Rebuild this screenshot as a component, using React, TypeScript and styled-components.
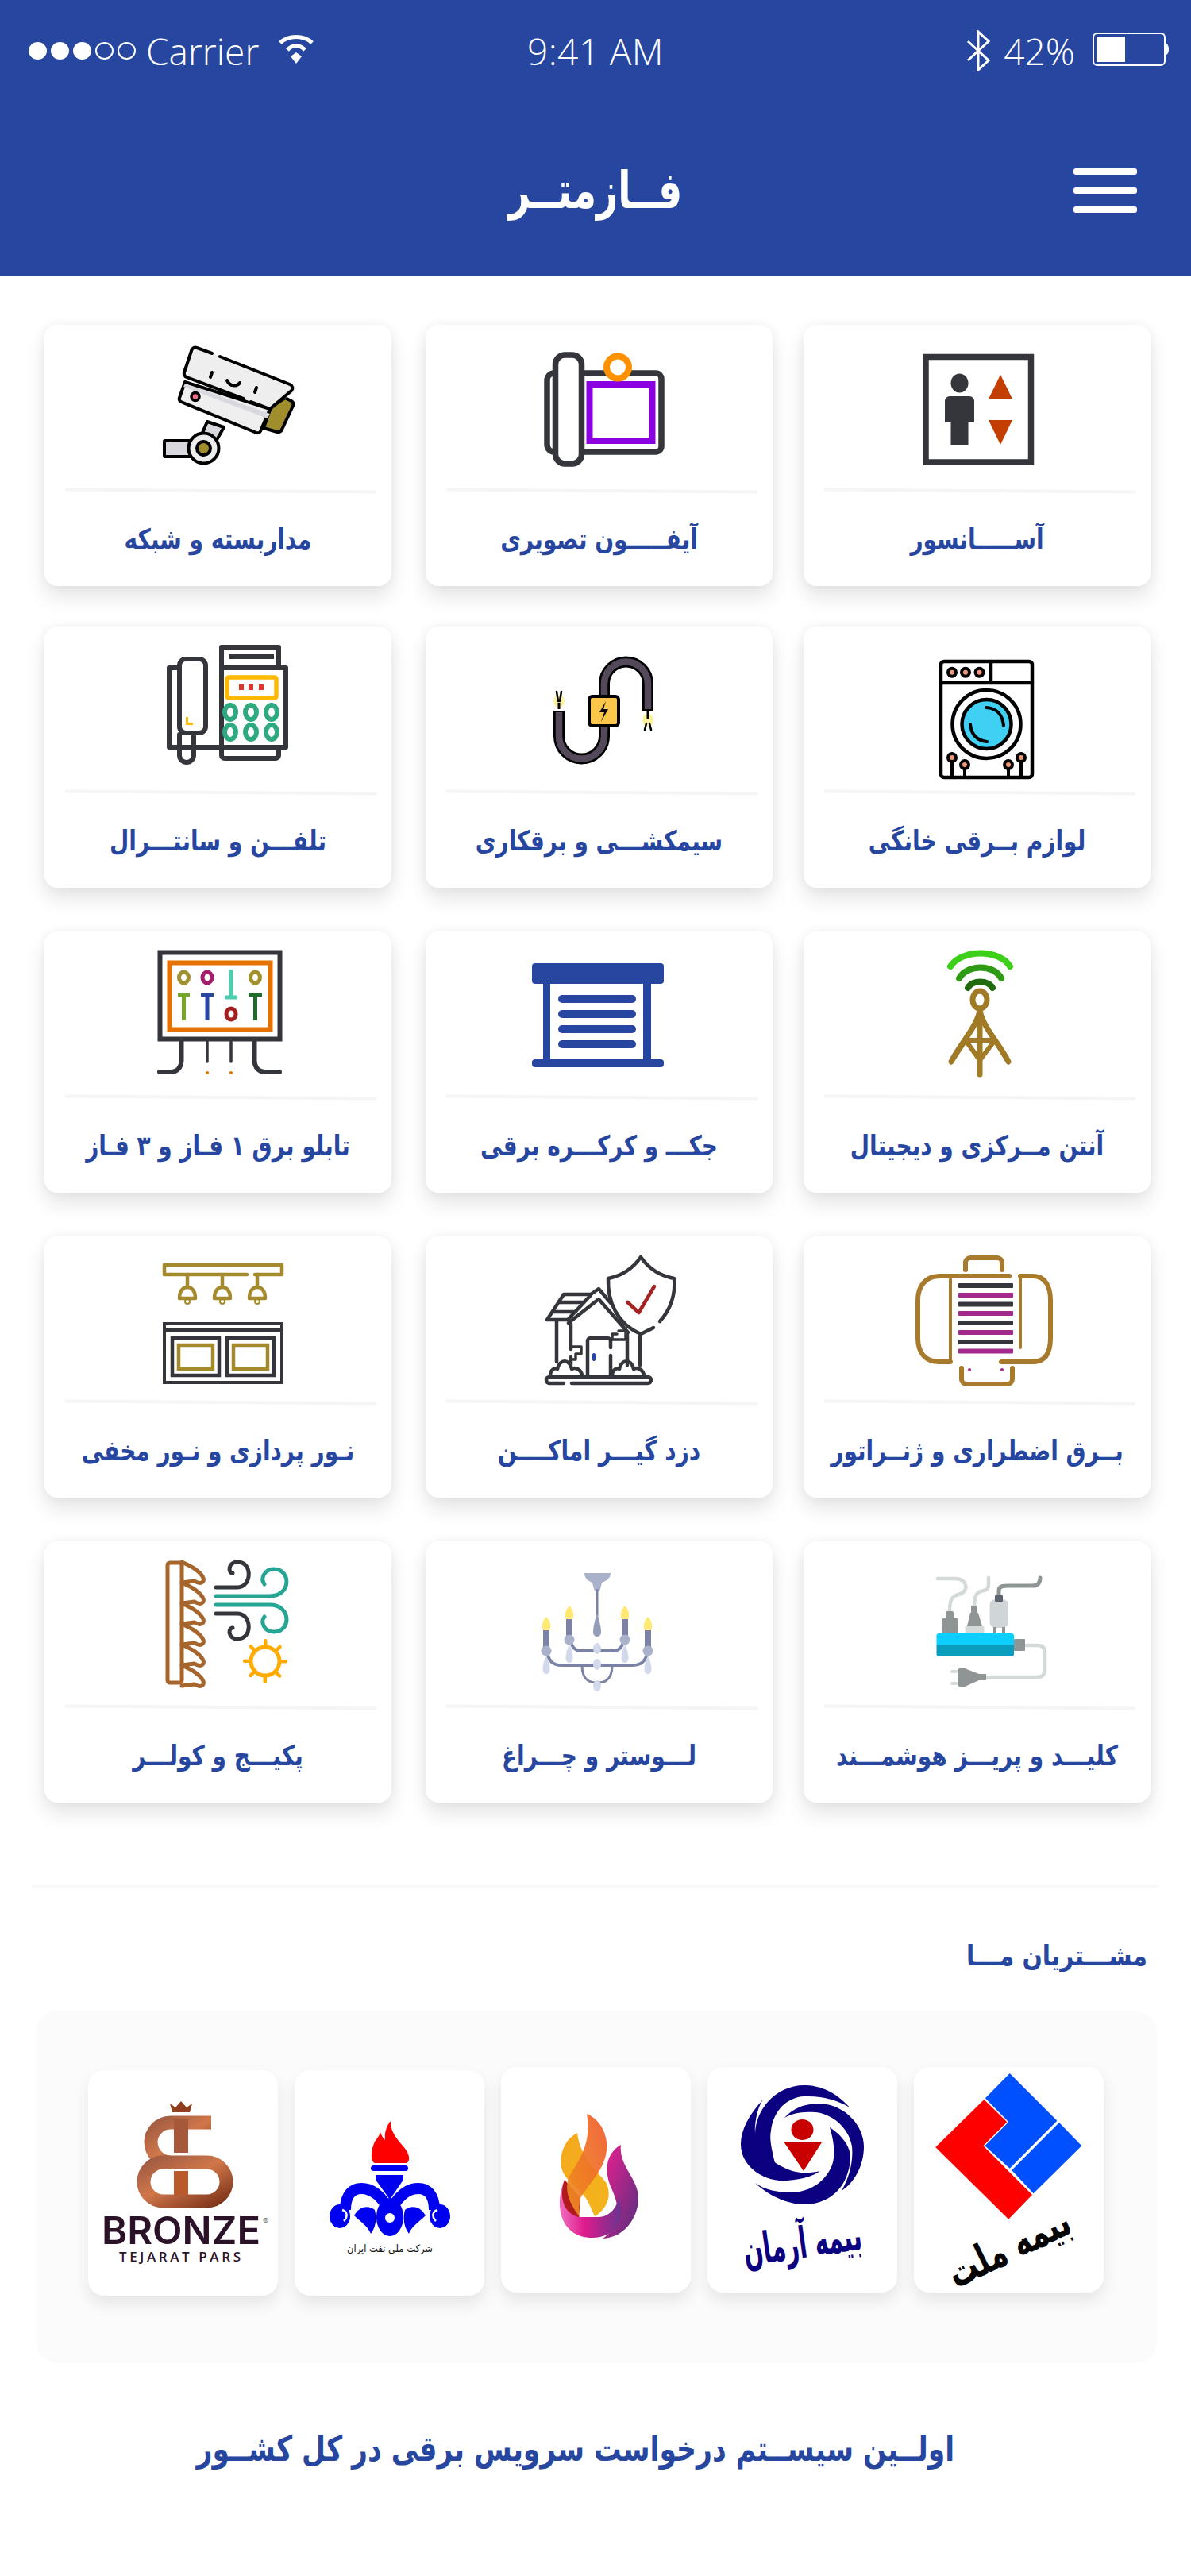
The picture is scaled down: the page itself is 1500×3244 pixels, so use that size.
import styled, { createGlobalStyle } from "styled-components";

const BLUE = "#2746a0";
const DARK = "#34363c";

const GlobalStyle = createGlobalStyle`
  html, body {
    margin: 0;
    padding: 0;
    background: #fff;
  }
  body {
    font-family: "DejaVu Sans", "Noto Sans", sans-serif;
  }
`;

const Page = styled.div`
  width: 1500px;
  height: 3244px;
  overflow: hidden;
  background: #fff;
`;

const Header = styled.header`
  height: 348px;
  box-sizing: border-box;
  padding-top: 38px;
  background: ${BLUE};
  color: #fff;
`;

const StatusBar = styled.div`
  display: grid;
  grid-template-columns: 1fr auto 1fr;
  align-items: center;
  height: 52px;
  padding: 0 26px 0 36px;
  font-family: "Open Sans", "Liberation Sans", sans-serif;
  font-weight: 300;
  font-size: 46px;
  line-height: 52px;
`;

const StatusLeft = styled.div`
  display: flex;
  align-items: center;
`;

const StatusRight = styled.div`
  display: flex;
  align-items: center;
  justify-content: flex-end;
`;

const Dots = styled.div`
  display: flex;
  gap: 5px;
  margin-right: 13px;
`;

const Dot = styled.span<{ $on: boolean }>`
  display: block;
  box-sizing: border-box;
  width: 23px;
  height: 22px;
  border-radius: 50%;
  border: 2px solid #fff;
  background: ${(p) => (p.$on ? "#fff" : "transparent")};
`;

const Clock = styled.div`
  margin: 0 10px 0 0;
  letter-spacing: 0.4px;
`;

const WifiIcon = styled.svg`
  width: 52px;
  height: 36px;
  margin-left: 21px;
  margin-top: -4px;
`;

const BluetoothIcon = styled.svg`
  width: 30px;
  height: 52px;
  margin-right: 17px;
`;

const BatteryIcon = styled.svg`
  width: 98px;
  height: 42px;
  margin-left: 22px;
  margin-top: -4px;
`;

const NavRow = styled.div`
  display: grid;
  grid-template-columns: 1fr auto 1fr;
  align-items: center;
  height: 100px;
  margin-top: 100px;
  padding: 0 68px;
`;

const Title = styled.h1`
  grid-column: 2;
  margin: 0;
  font-size: 64px;
  font-weight: 700;
  line-height: 100px;
  direction: rtl;
  transform: scaleX(0.74);
`;

const Burger = styled.div`
  justify-self: end;
  display: flex;
  flex-direction: column;
  gap: 16px;
`;

const BurgerBar = styled.span`
  display: block;
  width: 80px;
  height: 8px;
  border-radius: 3px;
  background: #fff;
`;

const CategoryGrid = styled.section`
  direction: rtl;
  display: grid;
  grid-template-columns: 437px 437px 441px;
  column-gap: 39px;
  row-gap: 55px;
  padding: 61px 51px 0 56px;
`;

const Card = styled.article`
  direction: ltr;
  display: flex;
  flex-direction: column;
  width: 437px;
  height: 329px;
  background: #fff;
  border-radius: 16px;
  box-shadow: 0 14px 26px rgba(0, 0, 0, 0.1), 0 0 14px rgba(0, 0, 0, 0.05);

  &:nth-child(3n) {
    justify-self: end;
  }
  &:nth-child(-n + 3) {
    margin-bottom: -4px;
  }
`;

const IconArea = styled.div`
  display: flex;
  justify-content: center;
  height: 207px;
  box-sizing: border-box;
  padding-top: 12px;
`;

const IconSvg = styled.svg`
  display: block;
  width: 200px;
  height: 190px;
`;

const Divider = styled.div`
  width: 392px;
  height: 4px;
  margin-left: 26px;
  background: #f5f5f5;
  transform: rotate(0.45deg);
`;

const Label = styled.h3`
  flex: 1;
  display: flex;
  align-items: center;
  justify-content: center;
  margin: 0;
  direction: rtl;
  color: ${BLUE};
  font-size: 35px;
  font-weight: 700;
  white-space: nowrap;
  transform: scaleX(0.8);
`;

const Separator = styled.div`
  height: 3px;
  margin: 104px 41px 0 40px;
  background: #f8f8f8;
`;

const SectionTitle = styled.h2`
  margin: 0 55px 0 0;
  height: 155px;
  box-sizing: border-box;
  padding-top: 66px;
  direction: rtl;
  color: ${BLUE};
  font-size: 35px;
  font-weight: 700;
  line-height: 40px;
  transform: scaleX(0.85);
  transform-origin: right center;
`;

const ClientsPanel = styled.section`
  direction: rtl;
  display: flex;
  gap: 21px;
  align-items: flex-start;
  height: 444px;
  box-sizing: border-box;
  margin: 0 43px 0 45px;
  padding: 71px 67px 0 0;
  border-radius: 28px;
  background: #fbfbfb;
`;

const LogoCard = styled.div<{ $drop?: boolean }>`
  direction: ltr;
  width: 239px;
  height: 284px;
  margin-top: ${(p) => (p.$drop ? "4px" : "0")};
  background: #fff;
  border-radius: 20px;
  overflow: hidden;
  box-shadow: 0 10px 20px rgba(0, 0, 0, 0.09);
`;

const LogoSvg = styled.svg`
  display: block;
  width: 239px;
  height: 284px;
`;

const Slogan = styled.p`
  margin: 78px 0 0;
  padding-right: 64px;
  direction: rtl;
  text-align: center;
  color: ${BLUE};
  font-size: 44px;
  font-weight: 700;
  line-height: 60px;
  white-space: nowrap;
  transform: scaleX(0.786);
`;

const Line = styled.g`
  fill: none;
  stroke-linecap: round;
  stroke-linejoin: round;
`;

function Elevator() {
  return (
    <IconSvg viewBox="0 0 200 190">
      <rect x="35" y="28.500" width="132.500" height="132.500" fill="none" stroke={DARK} strokeWidth="7.500" />
      <ellipse cx="77.500" cy="61.500" rx="11" ry="12" fill={DARK} />
      <path d="M65 78h25a6 6 0 0 1 6 6v27h-7.500v28h-22v-28h-7.500v-27a6 6 0 0 1 6-6z" fill={DARK} />
      <path d="M129 50.700 144 81.400H114Z M114 108H144L129 139Z" fill="#c43e00" />
    </IconSvg>
  );
}

function VideoPhone() {
  return (
    <IconSvg viewBox="0 0 200 190">
      <Line stroke={DARK} strokeWidth="7.500">
        <path d="M80 49H171a7 7 0 0 1 7 7V141a7 7 0 0 1-7 7H80" />
        <path d="M42 49a9 9 0 0 0-8 9v82a9 9 0 0 0 8 8" />
        <rect x="44.500" y="26" width="33" height="137" rx="12" />
      </Line>
      <rect x="87.500" y="63" width="79" height="71" fill="#fff" stroke="#8b00e0" strokeWidth="8" />
      <circle cx="123" cy="41.500" r="14" fill="#fff" stroke="#ff9100" strokeWidth="8" />
    </IconSvg>
  );
}

function Camera() {
  return (
    <IconSvg viewBox="0 0 200 190">
      <path d="M86 110 107 117 94 140 76 133Z" fill="#d8d8de" stroke="#000" strokeWidth="4" strokeLinejoin="round" />
      <rect x="32" y="134" width="36" height="20" rx="1" fill="#d8d8de" stroke="#000" strokeWidth="4" />
      <circle cx="81.500" cy="143.500" r="19" fill="#ededee" stroke="#000" strokeWidth="4" />
      <circle cx="81.500" cy="143.500" r="8.500" fill="#a08d2c" stroke="#000" strokeWidth="4" />
      <path d="M166 92 184 80 192 84a5 5 0 0 1 2 6L180 120a5 5 0 0 1-6 3L157 118Z" fill="#a08d2c" stroke="#000" strokeWidth="4" strokeLinejoin="round" />
      <path d="M58 60 51 80a4 4 0 0 0 2 5L148 124a4 4 0 0 0 5-2L165 94Z" fill="#efeff0" stroke="#000" strokeWidth="4" strokeLinejoin="round" />
      <path d="M58 62 165 100 162 106 56 66Z" fill="#d8d8de" />
      <circle cx="71" cy="78.500" r="5" fill="#f0708c" stroke="#000" strokeWidth="3.500" />
      <path d="M73 17 194 64a5 5 0 0 1 2 8L165 94 60 54a5 5 0 0 1-3-6L66 21a5 5 0 0 1 7-4Z" fill="#eeeeef" />
      <Line stroke="#000" strokeWidth="4">
        <path d="M92 24 73 17a5 5 0 0 0-7 4L57 48a5 5 0 0 0 3 6L132 81" />
        <path d="M102 28 190 63a5 5 0 0 1 2 8L165 94 141 85" />
        <path d="M92 48 90 54M148 67 146 73" />
        <path d="M111 58C114 66 124 66 127 61" />
      </Line>
    </IconSvg>
  );
}

function Washer() {
  return (
    <IconSvg viewBox="0 0 200 190">
      <Line stroke="#000" strokeWidth="4.500">
        <rect x="54" y="32" width="115" height="146" rx="4" />
        <path d="M54 59H169M117 32V59" />
        <circle cx="111.500" cy="111" r="43" />
      </Line>
      <circle cx="111.500" cy="111" r="31" fill="#3fd0f3" stroke="#000" strokeWidth="4.500" />
      <Line stroke="#000" strokeWidth="4">
        <path d="M111 90C125 91 132 100 133 113" />
        <path d="M91 111C92 124 100 132 112 133" />
        <path d="M68 153V178M84 162V178M139 162V178M155 153V178" />
      </Line>
      {[
        [68, 45.700],
        [85, 45.700],
        [102.500, 45.700],
        [68, 153],
        [84, 162],
        [139, 162],
        [155, 153],
      ].map(([x, y]) => (
        <circle key={`${x}-${y}`} cx={x} cy={y} r="5" fill="#f2997a" stroke="#000" strokeWidth="4" />
      ))}
    </IconSvg>
  );
}

function Cable() {
  return (
    <IconSvg viewBox="0 0 200 190">
      <ellipse cx="49" cy="82" rx="7" ry="8" fill="#fdf3a0" />
      <ellipse cx="161" cy="106" rx="7" ry="8" fill="#fdf3a0" />
      <Line stroke="#000" strokeWidth="2.500">
        <path d="M46 70 48 82M52 70 50 82M159 110 157 118M163 110 165 118" />
      </Line>
      <Line stroke="#000" strokeWidth="14">
        <path d="M106 75V60A27 27 0 0 1 161 60V94" strokeLinecap="butt" />
        <path d="M106 113V126A28 28 0 0 1 49 126V94" strokeLinecap="butt" />
      </Line>
      <Line stroke="#53495a" strokeWidth="8.500">
        <path d="M106 75V60A27 27 0 0 1 161 60V92" strokeLinecap="butt" />
        <path d="M106 113V126A28 28 0 0 1 49 126V96" strokeLinecap="butt" />
      </Line>
      <path d="M49 84V92M161 94V104" stroke="#000" strokeWidth="3" />
      <rect x="87" y="76" width="37" height="37" rx="4" fill="#fbc64a" stroke="#000" strokeWidth="4" />
      <path d="M108 82 100 96H106L102 108 111 92H105Z" fill="#000" />
    </IconSvg>
  );
}

function FaxPhone() {
  return (
    <IconSvg viewBox="0 0 200 190">
      <Line stroke={DARK} strokeWidth="6">
        <path d="M50 40H38V140H185V40H105" />
        <path d="M104 38V14H176V38" />
        <path d="M104 142V150a4 4 0 0 0 4 4H172a4 4 0 0 0 4-4V142" />
        <rect x="51" y="29" width="33" height="93" rx="8" />
        <path d="M104 40V140" />
        <path d="M51 124V150a9 9 0 0 0 18 0V124" />
      </Line>
      <path d="M114 26H170" stroke={DARK} strokeWidth="6" />
      <rect x="111" y="52" width="62" height="26" rx="2" fill="none" stroke="#ffb900" strokeWidth="5.500" />
      <path d="M126 61h6v7h-6zM138 61h6v7h-6zM151 61h6v7h-6z" fill="#e0352b" />
      <path d="M59 102h3v7h6v3h-9z" fill="#ffb900" />
      {[115, 141, 167].map((x) =>
        [96, 121].map((y) => (
          <ellipse key={`${x}-${y}`} cx={x} cy={y} rx="7" ry="9" fill="none" stroke="#2faa80" strokeWidth="6" />
        )),
      )}
    </IconSvg>
  );
}

function Antenna() {
  const brown = "#a07a25";
  return (
    <IconSvg viewBox="0 0 200 190">
      <Line strokeWidth="8">
        <path d="M66 32C80 10 128 10 141 32" stroke="#3ecf1a" />
        <path d="M77 47C87 29 121 29 130 47" stroke="#2f9b14" />
        <path d="M88 59C93 49 114 49 119 59" stroke="#1f6b0e" />
      </Line>
      <Line stroke={brown} strokeWidth="7">
        <ellipse cx="103" cy="74" rx="9" ry="11" />
        <path d="M103 88C98 110 78 130 67 152M103 88C108 110 128 130 139 152" />
        <path d="M103 88V168" />
        <path d="M67 152 85 125 103 150 122 125 139 152M85 125H122" strokeWidth="6" />
      </Line>
    </IconSvg>
  );
}

function Shutter() {
  return (
    <IconSvg viewBox="0 0 200 190">
      <rect x="15" y="28" width="166" height="26" rx="4" fill={BLUE} />
      <rect x="29" y="54" width="9" height="96" fill={BLUE} />
      <rect x="155" y="54" width="10" height="96" fill={BLUE} />
      {[68, 87, 106, 125].map((y) => (
        <rect key={y} x="48" y={y} width="98" height="10" rx="5" fill={BLUE} />
      ))}
      <rect x="15" y="149" width="166" height="10" rx="4" fill={BLUE} />
    </IconSvg>
  );
}

function Panel() {
  return (
    <IconSvg viewBox="0 0 200 190">
      <rect x="26.500" y="14.500" width="151" height="109" fill="none" stroke={DARK} strokeWidth="6" />
      <rect x="38.500" y="27.500" width="127" height="84" fill="none" stroke="#e57200" strokeWidth="6" />
      <ellipse cx="56.500" cy="46" rx="6" ry="7" fill="none" stroke="#a0912d" strokeWidth="5" />
      <ellipse cx="86" cy="46" rx="6" ry="7" fill="none" stroke="#a31f6c" strokeWidth="5" />
      <ellipse cx="146.500" cy="46" rx="6" ry="7" fill="none" stroke="#a0912d" strokeWidth="5" />
      <ellipse cx="116" cy="92" rx="6" ry="7" fill="none" stroke="#a31f1f" strokeWidth="5" />
      <path d="M49 68H64M56.500 68V100" stroke="#76a52b" strokeWidth="5" fill="none" />
      <path d="M78 68H94M86 68V100" stroke={BLUE} strokeWidth="5" fill="none" />
      <path d="M108 71H124M116 36V71" stroke="#4ccfae" strokeWidth="5" fill="none" />
      <path d="M138 68H155M146.500 68V100" stroke="#1f6b2c" strokeWidth="5" fill="none" />
      <Line stroke={DARK} strokeWidth="6">
        <path d="M53.500 127V150C53.500 160 47 165 41 165H26" />
        <path d="M145.500 127V150C145.500 160 152 165 158 165H177" />
        <path d="M86 127V152M116 127V152" strokeWidth="3.500" />
      </Line>
      <circle cx="86" cy="166" r="2" fill="#e57200" />
      <circle cx="116" cy="166" r="2" fill="#e57200" />
    </IconSvg>
  );
}

function Generator() {
  const brown = "#a87a2c";
  return (
    <IconSvg viewBox="0 0 200 190">
      <Line stroke={brown} strokeWidth="6">
        <path d="M140 38H52C34 38 25 52 25 68V116C25 134 34 146 52 146H66" />
        <path d="M154 38H170C186 38 192 52 192 68V116C192 134 186 146 170 146H130" />
        <path d="M66 42V144M154 38V128" strokeWidth="4" />
        <path d="M85 30V21a6 6 0 0 1 6-6H125a6 6 0 0 1 6 6V30" />
        <path d="M80 154V168a6 6 0 0 0 6 6H138a6 6 0 0 0 6-6V154" />
      </Line>
      {[50, 62, 73.500, 85, 97, 109, 121, 132.500].map((y, i) => (
        <rect key={y} x="76" y={y - 3} width="69" height="6" rx="1" fill={i % 2 ? "#a32a8c" : DARK} />
      ))}
      <circle cx="90" cy="156" r="2" fill="#a32a8c" />
      <circle cx="131" cy="156" r="2" fill="#a32a8c" />
    </IconSvg>
  );
}

function AlarmHouse() {
  return (
    <IconSvg viewBox="0 0 200 190">
      <Line stroke={DARK} strokeWidth="4.500">
        <path d="M176 95C190 80 196 60 194 41 178 38 163 30 152 14 141 30 126 38 111 41 110 70 122 98 152 111L168 103" />
        <path d="M61 97 99 67 136 109" />
        <path d="M89 61 99 54 116 74" />
        <path d="M89 61H55L34 93H60L89 62" />
        <path d="M50 71H80M43 83H70" />
        <path d="M46 94V146M64 98V130M64 140V150M135 112V150M151 112V150" />
        <path d="M85 163V120a4 4 0 0 1 4-4H110a4 4 0 0 1 4 4V128M114 138V163" />
        <path d="M64 127H77V136H70V143H64M122 111H116V118H133V107H124" strokeWidth="3.500" />
        <path d="M38 163C38 156 44 153 47 155 50 142 62 142 65 155 70 152 77 156 78 163" />
        <path d="M116 163C116 156 122 153 125 155 128 142 140 142 143 155 148 152 155 156 156 163" />
        <path d="M113 165H161a4 4 0 0 1 4 4V169a4 4 0 0 1-4 4H65M55 173H37a4 4 0 0 1-4-4 4 4 0 0 1 4-4H113" />
      </Line>
      <ellipse cx="93" cy="140" rx="2.500" ry="5" fill={BLUE} />
      <path d="M135.500 71 149.500 84 169 51" fill="none" stroke="#a52222" strokeWidth="4.500" strokeLinecap="round" strokeLinejoin="round" />
    </IconSvg>
  );
}

function LightPanel() {
  const gold = "#a58a2d";
  return (
    <IconSvg viewBox="0 0 200 190">
      <Line stroke={gold} strokeWidth="4.500">
        <path d="M136 36H32V24H180V36H146" />
        <path d="M61 36V51M105 36V51M149 36V51" />
        <path d="M51 66C51 56 56 52 61 52 66 52 71 56 71 66Z" />
        <path d="M95 66C95 56 100 52 105 52 110 52 115 56 115 66Z" />
        <path d="M139 66C139 56 144 52 149 52 154 52 159 56 159 66Z" />
      </Line>
      <circle cx="61" cy="70" r="3" fill="none" stroke={gold} strokeWidth="2" />
      <circle cx="105" cy="70" r="3" fill="none" stroke={gold} strokeWidth="2" />
      <circle cx="149" cy="70" r="3" fill="none" stroke={gold} strokeWidth="2" />
      <rect x="32" y="98" width="148" height="74" fill="none" stroke={DARK} strokeWidth="4" />
      <path d="M32 106H180" stroke={DARK} strokeWidth="4" />
      <rect x="42" y="116" width="59" height="47" fill="none" stroke={DARK} strokeWidth="4.500" />
      <rect x="111" y="116" width="59" height="47" fill="none" stroke={DARK} strokeWidth="4.500" />
      <rect x="50" y="125" width="43" height="30" fill="none" stroke={gold} strokeWidth="4.500" />
      <rect x="119" y="125" width="43" height="30" fill="none" stroke={gold} strokeWidth="4.500" />
    </IconSvg>
  );
}

function SmartPlug() {
  return (
    <IconSvg viewBox="0 0 200 190">
      <Line stroke="#d4d9da" strokeWidth="4.500">
        <path d="M50 35H72C88 35 90 52 76 55 68 57 65 62 65 76" />
        <path d="M114 34V42C114 50 108 50 104 51 98 53 96 60 96 69" />
        <path d="M161 119H176C182 119 185 122 185 128V149C185 155 182 159 176 159H111" />
      </Line>
      <path d="M127 56V50C127 44 133 44 140 44H170C176 44 179 40 179 34" fill="none" stroke="#8f9494" strokeWidth="5" strokeLinecap="round" />
      <rect x="55.500" y="85" width="20" height="19" rx="2" fill="#8f9494" />
      <rect x="60" y="76" width="10" height="10" rx="2" fill="#8f9494" />
      <path d="M91 78H101L106 95H87Z" fill="#8f9494" />
      <rect x="92" y="69" width="8" height="9" fill="#8f9494" />
      <rect x="84.500" y="95" width="24" height="9" rx="1" fill="#d4d9da" />
      <rect x="115.500" y="61" width="23.500" height="36" rx="7" fill="#d0d6d8" />
      <rect x="120" y="96" width="4" height="8" fill="#8f9494" />
      <rect x="131" y="96" width="4" height="8" fill="#8f9494" />
      <rect x="122" y="55" width="10" height="10" rx="2" fill="#5f6470" />
      <path d="M48.500 107a3 3 0 0 1 3-3H143a3 3 0 0 1 3 3V119H48.500Z" fill="#0dcfff" />
      <path d="M48.500 118.500H146V130a3 3 0 0 1-3 3H51.500a3 3 0 0 1-3-3Z" fill="#0a9dbd" />
      <rect x="146" y="111" width="14" height="15" rx="1" fill="#8f9494" />
      <rect x="66" y="150" width="9" height="4" rx="2" fill="#d4d9da" />
      <rect x="66" y="165" width="9" height="4" rx="2" fill="#d4d9da" />
      <path d="M78 148H84L102 155H111V163H102L84 171H78a3 3 0 0 1-3-3V151a3 3 0 0 1 3-3Z" fill="#8f9494" />
    </IconSvg>
  );
}

function Chandelier() {
  const arm = "#7c82a5";
  const ball = "#aab1cb";
  const drop = "#d3d9ec";
  const bulbs: [number, number][] = [
    [33, 83],
    [62, 69],
    [132, 69],
    [161, 83],
  ];
  return (
    <IconSvg viewBox="0 0 200 190">
      <path d="M81 28H114C114 36 106 39 103 40L101 48C99 53 95 53 93 48L91 40C88 39 81 36 81 28Z" fill={ball} />
      <rect x="96" y="48" width="2.500" height="34" fill={arm} />
      <path d="M97 78C100 88 102 96 102 102 102 110 92 110 92 102 92 96 94 88 97 78Z" fill="#959cbb" />
      <path d="M33 125C36 140 42 144 52 144H142C152 144 158 140 162 125" fill="none" stroke={arm} strokeWidth="4" />
      <path d="M62 105C63 118 68 126 76 126H118C126 126 131 118 132 105" fill="none" stroke={arm} strokeWidth="4" />
      <path d="M78 144C78 165 90 166 97 166 104 166 116 165 116 144" fill="none" stroke={arm} strokeWidth="3" />
      {bulbs.map(([x, y]) => (
        <g key={x}>
          <path d={`M${x} ${y}C${x + 6} ${y + 6} ${x + 6} ${y + 13} ${x + 4} ${y + 17}H${x - 4}C${x - 6} ${y + 13} ${x - 6} ${y + 6} ${x} ${y}Z`} fill="#ffe873" />
          <rect x={x - 4} y={y + 17} width="8" height="23" fill={arm} />
          <ellipse cx={x} cy={y + 43} rx="6.500" ry="6.500" fill={ball} />
          <path d={`M${x} ${y + 49}C${x + 6} ${y + 62} ${x + 6} ${y + 72} ${x} ${y + 72}S${x - 6} ${y + 62} ${x} ${y + 49}Z`} fill={drop} />
        </g>
      ))}
      <ellipse cx="97" cy="123" rx="5" ry="7" fill={drop} />
      <ellipse cx="97" cy="143" rx="5" ry="7" fill={drop} />
      <ellipse cx="97" cy="170" rx="5" ry="7" fill={drop} />
    </IconSvg>
  );
}

function Cooler() {
  const brown = "#a6652a";
  const teal = "#26a594";
  const teeth = [0, 45, 90, 135, 180, 225, 270, 315];
  const lobes = [14, 40, 66, 92, 118, 144]
    .map((y) => `C64 ${y + 5} 76 ${y + 10} 81 ${y + 20}C83 ${y + 27} 76 ${y + 28} 70 ${y + 24}L54 ${y + 26}`)
    .join("");
  return (
    <IconSvg viewBox="0 0 200 190">
      <Line stroke={brown} strokeWidth="5">
        <rect x="36" y="15" width="18" height="151" rx="3" />
        <path d={`M54 14${lobes}`} />
      </Line>
      <Line stroke={DARK} strokeWidth="5">
        <path d="M97 46H124C142 46 144 14 124 14 112 14 112 28 118 28" />
        <path d="M97 79H124C142 79 144 111 124 111 112 111 112 97 118 97" />
      </Line>
      <Line stroke={teal} strokeWidth="5">
        <path d="M97 57H165C192 57 192 23 170 23 157 23 153 36 158 42" />
        <path d="M97 68H165C192 68 192 102 170 102 157 102 153 89 158 83" />
      </Line>
      <circle cx="159" cy="139" r="18" fill="none" stroke="#ffab00" strokeWidth="5" />
      {teeth.map((a) => (
        <rect key={a} x="157" y="111" width="4.500" height="10" rx="2" fill="#ffab00" transform={`rotate(${a} 159 139)`} />
      ))}
    </IconSvg>
  );
}

function MellatLogo() {
  return (
    <LogoSvg viewBox="0 0 239 284">
      <path d="M120.700 8 180.400 67.700 120.700 127.700 89.400 99.300 119.200 69.300 89.900 39.300Z" fill="#0050ff" />
      <path d="M183 70 211.300 99.300 150.600 159.300 123.200 130Z" fill="#0050ff" />
      <path d="M88.400 41 117.300 69.300 87.400 99.300 149 161 119.200 191.700 27.200 101Z" fill="#ff0000" />
      <text x="120" y="245" fontFamily="'DejaVu Sans', sans-serif" fontWeight="700" fontSize="54" direction="rtl" textAnchor="middle" fill="#050505" transform="rotate(-26 120 228)" textLength="165" lengthAdjust="spacingAndGlyphs">
        بیمه ملت
      </text>
    </LogoSvg>
  );
}

function ArmanLogo() {
  const navy = "#0b0080";
  return (
    <LogoSvg viewBox="0 0 239 284">
      <path fill={navy} d="M179 51C160 30 140 23 122 23 85 23 60 55 60 85 60 100 72 112 85 121 80 100 78 90 80 80 83 55 100 38 122 37 145 36 165 42 179 51Z" />
      <path fill={navy} d="M70 41C52 60 42 80 42 97 42 125 70 145 100 143 118 142 132 138 142 131 125 135 110 134 95 126 72 115 58 95 60 75 61 62 64 50 70 41Z" />
      <path fill={navy} d="M60 146C80 165 105 173 122 173 155 173 178 150 180 115 181 100 168 85 154 76 160 95 162 115 155 128 145 148 125 158 105 158 90 158 72 155 60 146Z" />
      <path fill={navy} d="M97 64C110 50 125 46 142 46 175 48 197 75 197 100 197 125 185 145 169 156 178 140 184 120 182 100 178 75 155 58 135 57 120 56 108 58 97 64Z" />
      <ellipse cx="119.500" cy="79" rx="14" ry="13" fill="#c80000" />
      <path d="M96 94H144.500L121 131Z" fill="#c80000" />
      <text x="120" y="240" fontFamily="'DejaVu Sans', sans-serif" fontWeight="700" fontSize="54" direction="rtl" textAnchor="middle" fill={navy} textLength="150" lengthAdjust="spacingAndGlyphs" transform="rotate(-8 120 225)">
        بیمه آرمان
      </text>
    </LogoSvg>
  );
}

function FlameLogo() {
  return (
    <LogoSvg viewBox="0 0 239 284">
      <defs>
        <linearGradient id="flameRight" x1="0" y1="0" x2="1" y2="1">
          <stop offset="0" stopColor="#ee1f90" />
          <stop offset="1" stopColor="#53307f" />
        </linearGradient>
        <linearGradient id="flameBowl" x1="0" y1="0" x2="1" y2="0">
          <stop offset="0" stopColor="#f070c0" />
          <stop offset="0.4" stopColor="#e01a8c" />
          <stop offset="1" stopColor="#6a3390" />
        </linearGradient>
        <linearGradient id="flameOrange" x1="1" y1="0" x2="0" y2="1">
          <stop offset="0" stopColor="#f0582c" />
          <stop offset="1" stopColor="#ee9020" />
        </linearGradient>
        <linearGradient id="flameGold" x1="0" y1="0" x2="1" y2="1">
          <stop offset="0" stopColor="#f5a81e" />
          <stop offset="1" stopColor="#f3b51c" />
        </linearGradient>
      </defs>
      <path fill="url(#flameRight)" d="M151 98C130 110 130 135 140 155 150 178 152 200 128 216 155 215 173 190 173 165 173 140 148 125 151 98Z" />
      <path fill="url(#flameBowl)" d="M80 142C66 175 75 215 115 215 145 215 158 190 148 165 145 180 135 190 118 189L99 189C90 180 85 160 80 142Z" />
      <path fill="#b01a1f" d="M80 142C72 165 80 185 98 189L100 165Z" />
      <path fill="url(#flameGold)" d="M96 83C78 92 72 115 77 130 85 150 105 155 112 175L118 188C135 178 140 160 132 145 120 130 100 115 96 83Z" />
      <path fill="url(#flameOrange)" opacity="0.92" d="M108 59C125 66 135 85 133 105 130 130 112 145 100 165 98 175 98 182 99 189 85 170 80 155 85 140 95 120 115 100 108 59Z" />
    </LogoSvg>
  );
}

function OilLogo() {
  const blue = "#0000f0";
  const half = (
    <>
      <ellipse cx="57" cy="184" rx="13" ry="15" fill={blue} />
      <path d="M64 176C64 156 74 149 84 149 100 149 110 160 118 175" fill="none" stroke={blue} strokeWidth="14" />
      <path d="M75 183C84 168 96 172 101 176 104 188 102 198 96 206 92 196 84 192 75 183Z" fill={blue} />
      <path d="M60 176C66 178 68 184 62 190" fill="none" stroke="#fff" strokeWidth="2.500" />
    </>
  );
  return (
    <LogoSvg viewBox="0 0 239 284">
      <path fill="#ff0000" d="M121 64C120 80 133 90 140 100 147 110 144 117 140 117H101C95 115 96 100 101 90 104 86 107 82 108 78 110 84 112 86 114 88 113 78 116 70 121 64Z" />
      <rect x="96" y="120" width="47" height="7" rx="3.500" fill={blue} />
      <path d="M102 132H137V138L120 163 102 138Z" fill={blue} />
      {half}
      <g transform="translate(240 0) scale(-1 1)">{half}</g>
      <ellipse cx="120" cy="185" rx="17" ry="24" fill={blue} />
      <circle cx="120" cy="186" r="6" fill="#fff" />
      <text x="120" y="229" fontFamily="'DejaVu Sans', sans-serif" fontSize="13" direction="rtl" textAnchor="middle" fill="#111" textLength="108" lengthAdjust="spacingAndGlyphs">
        شرکت ملی نفت ایران
      </text>
    </LogoSvg>
  );
}

function BronzeLogo() {
  return (
    <LogoSvg viewBox="0 0 239 284">
      <defs>
        <linearGradient id="bronzeMetal" x1="0" y1="0" x2="1" y2="1">
          <stop offset="0" stopColor="#a05c42" />
          <stop offset="0.45" stopColor="#d0764a" />
          <stop offset="1" stopColor="#7e3519" />
        </linearGradient>
      </defs>
      <path d="M106 53 103 42 110 47 117 39 124 47 131 42 128 53Z" fill="#8f3f1c" />
      <g fill="none" stroke="url(#bronzeMetal)" strokeWidth="17">
        <path d="M155 66H104C88 66 79 80 79 90 79 104 90 116 104 116" />
        <rect x="70" y="116" width="104" height="49" rx="24.500" />
      </g>
      <rect x="108" y="62" width="18" height="42" fill="#a6583a" />
      <rect x="108" y="127" width="18" height="30" fill="#b85a2a" />
      <text x="17" y="219" direction="ltr" fontFamily="Inter, 'Liberation Sans', sans-serif" fontWeight="600" fontSize="48" fill="#2c1228" textLength="200" lengthAdjust="spacingAndGlyphs">
        BRONZE
      </text>
      <text x="220" y="194" direction="ltr" fontFamily="Inter, sans-serif" fontSize="11" fill="#777">
        ®
      </text>
      <text x="39" y="241" direction="ltr" fontFamily="'Open Sans', sans-serif" fontWeight="600" fontSize="17" fill="#2c1228" textLength="153">
        TEJARAT PARS
      </text>
    </LogoSvg>
  );
}

const CATEGORIES = [
  { label: "آســـــانسور", icon: <Elevator /> },
  { label: "آیفـــــون تصویری", icon: <VideoPhone /> },
  { label: "مداربسته و شبکه", icon: <Camera /> },
  { label: "لوازم بــرقی خانگی", icon: <Washer /> },
  { label: "سیمکشـــی و برقکاری", icon: <Cable /> },
  { label: "تلفـــن و سانتـــرال", icon: <FaxPhone /> },
  { label: "آنتن مــرکزی و دیجیتال", icon: <Antenna /> },
  { label: "جکـــ و کرکـــره برقی", icon: <Shutter /> },
  { label: "تابلو برق ۱ فـاز و ۳ فـاز", icon: <Panel /> },
  { label: "بــرق اضطراری و ژنــراتور", icon: <Generator /> },
  { label: "دزد گیـــر اماکــــن", icon: <AlarmHouse /> },
  { label: "نـور پردازی و نـور مخفی", icon: <LightPanel /> },
  { label: "کلیـــد و پریـــز هوشمـــند", icon: <SmartPlug /> },
  { label: "لـــوستر و چـــراغ", icon: <Chandelier /> },
  { label: "پکیـــج و کولـــر", icon: <Cooler /> },
];

export default function App() {
  return (
    <Page>
      <GlobalStyle />
      <Header>
        <StatusBar>
          <StatusLeft>
            <Dots>
              {[true, true, true, false, false].map((on, i) => (
                <Dot key={i} $on={on} />
              ))}
            </Dots>
            Carrier
            <WifiIcon viewBox="0 0 52 36">
              <path d="M26 22 33 27 26 36 19 27Z" fill="#fff" />
              <path d="M15 19C21 12 31 12 37 19" fill="none" stroke="#fff" strokeWidth="5" />
              <path d="M6 10C16 0 36 0 46 10" fill="none" stroke="#fff" strokeWidth="5" />
            </WifiIcon>
          </StatusLeft>
          <Clock>9:41 AM</Clock>
          <StatusRight>
            <BluetoothIcon viewBox="0 0 30 52">
              <path d="M2 14 28 38 15 50V2L28 14 2 38" fill="none" stroke="#fff" strokeWidth="3" />
            </BluetoothIcon>
            42%
            <BatteryIcon viewBox="0 0 98 42">
              <rect x="1" y="1" width="90" height="40" rx="5" fill="none" stroke="#fff" strokeWidth="2" />
              <rect x="5" y="5" width="36" height="32" fill="#fff" />
              <path d="M93 14C97 16 97 26 93 28Z" fill="#fff" />
            </BatteryIcon>
          </StatusRight>
        </StatusBar>
        <NavRow>
          <Title>فــازمتــر</Title>
          <Burger>
            <BurgerBar />
            <BurgerBar />
            <BurgerBar />
          </Burger>
        </NavRow>
      </Header>

      <CategoryGrid>
        {CATEGORIES.map((c) => (
          <Card key={c.label}>
            <IconArea>{c.icon}</IconArea>
            <Divider />
            <Label>{c.label}</Label>
          </Card>
        ))}
      </CategoryGrid>

      <Separator />
      <SectionTitle>مشـــتریان مـــا</SectionTitle>
      <ClientsPanel>
        <LogoCard>
          <MellatLogo />
        </LogoCard>
        <LogoCard>
          <ArmanLogo />
        </LogoCard>
        <LogoCard>
          <FlameLogo />
        </LogoCard>
        <LogoCard $drop>
          <OilLogo />
        </LogoCard>
        <LogoCard $drop>
          <BronzeLogo />
        </LogoCard>
      </ClientsPanel>
      <Slogan>اولــین سیســتم درخواست سرویس برقی در کل کشــور</Slogan>
    </Page>
  );
}
